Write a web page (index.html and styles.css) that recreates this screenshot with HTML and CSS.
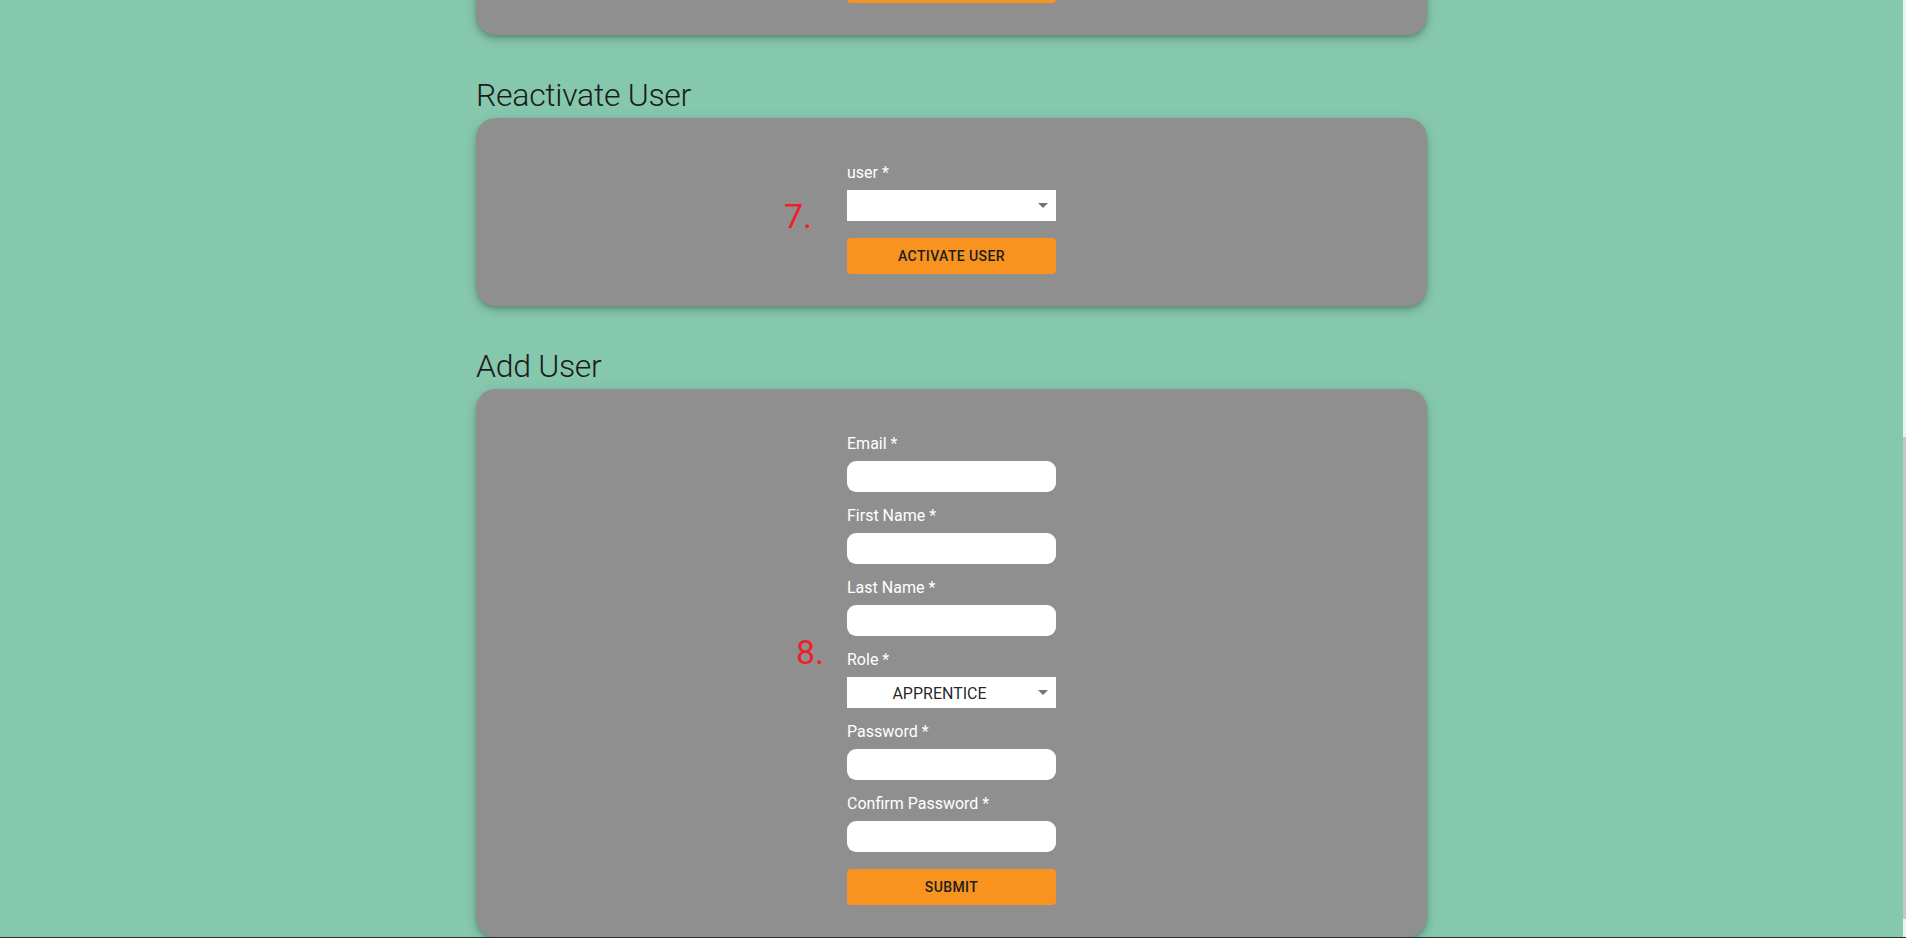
FILE: index.html
```html
<!DOCTYPE html>
<html lang="en">
<head>
<meta charset="utf-8">
<title>Users</title>
<link rel="stylesheet" href="styles.css">
</head>
<body>
<main class="page">
  <section class="card card-partial">
    <div class="form">
      <button class="btn" type="button"></button>
    </div>
  </section>

  <h2 class="section-title">Reactivate User</h2>
  <section class="card">
    <span class="annotation annotation-7">7.</span>
    <div class="form">
      <div class="field">
        <label class="label">user *</label>
        <div class="select">
          <span class="select-value"></span>
          <svg class="caret" width="10" height="5" viewBox="0 0 10 5"><path d="M0 0h10L5 5z" fill="#757575"/></svg>
        </div>
      </div>
      <button class="btn" type="button">Activate User</button>
    </div>
  </section>

  <h2 class="section-title">Add User</h2>
  <section class="card">
    <span class="annotation annotation-8">8.</span>
    <div class="form">
      <div class="field">
        <label class="label">Email *</label>
        <input class="input" type="text">
      </div>
      <div class="field">
        <label class="label">First Name *</label>
        <input class="input" type="text">
      </div>
      <div class="field">
        <label class="label">Last Name *</label>
        <input class="input" type="text">
      </div>
      <div class="field">
        <label class="label">Role *</label>
        <div class="select">
          <span class="select-value">APPRENTICE</span>
          <svg class="caret" width="10" height="5" viewBox="0 0 10 5"><path d="M0 0h10L5 5z" fill="#757575"/></svg>
        </div>
      </div>
      <div class="field">
        <label class="label">Password *</label>
        <input class="input" type="password">
      </div>
      <div class="field">
        <label class="label">Confirm Password *</label>
        <input class="input" type="password">
      </div>
      <button class="btn" type="button">Submit</button>
    </div>
  </section>
</main>
<div class="scrollbar"><div class="scrollbar-thumb"></div></div>
<div class="window-edge"></div>
</body>
</html>
```

FILE: styles.css
```css
html {
  overflow: hidden;
}

body {
  margin: 0;
  padding: 0 3px 0 0;
  background: #86c8ae;
  font-family: Roboto, "Liberation Sans", Arial, sans-serif;
  height: 938px;
  overflow: hidden;
}

.page {
  width: 951px;
  margin: -33px auto 0;
}

.card {
  position: relative;
  background: #8f8f8f;
  border-radius: 20px;
  padding: 45px 0 32px;
  box-shadow: 0 3px 5px -1px rgba(0, 0, 0, 0.2), 0 5px 10px 0 rgba(0, 0, 0, 0.12), 0 1px 14px 0 rgba(0, 0, 0, 0.08);
}

.card-partial {
  padding-top: 0;
  border-radius: 0 0 20px 20px;
}

.section-title {
  margin: 40px 0 3px;
  font-size: 32px;
  line-height: 40px;
  font-weight: 300;
  letter-spacing: -0.3px;
  color: #1c1c1c;
}

.form {
  width: 209px;
  margin: 0 auto;
  display: flex;
  flex-direction: column;
  gap: 14px;
}

.field {
  display: flex;
  flex-direction: column;
}

.label {
  display: block;
  font-size: 16px;
  line-height: 19px;
  margin-bottom: 8px;
  color: #ffffff;
  font-weight: 400;
}

.input {
  display: block;
  box-sizing: border-box;
  width: 209px;
  height: 31px;
  border: none;
  border-radius: 9px;
  background: #ffffff;
  padding: 0 10px;
  margin: 0;
  font: inherit;
  outline: none;
}

.select {
  display: flex;
  align-items: center;
  width: 209px;
  height: 31px;
  background: #ffffff;
  box-sizing: border-box;
}

.select-value {
  flex: 1;
  text-align: center;
  font-size: 16px;
  color: rgba(0, 0, 0, 0.87);
  padding-top: 1px;
}

.caret {
  display: block;
  margin: 0 8px 1px 6px;
}

.btn {
  display: block;
  width: 209px;
  height: 36px;
  margin-top: 3px;
  border: none;
  border-radius: 4px;
  background: #f7931e;
  color: #1d1d1d;
  font-family: Roboto, "Liberation Sans", Arial, sans-serif;
  font-size: 14px;
  font-weight: 500;
  letter-spacing: 0.4px;
  text-transform: uppercase;
  padding: 0;
}

.card-partial .btn {
  margin-top: 0;
}

.annotation {
  position: absolute;
  font-size: 34px;
  line-height: 34px;
  font-weight: 400;
  color: #ee1f2a;
}

.annotation-7 {
  left: 308px;
  top: 81px;
}

.annotation-8 {
  left: 320px;
  top: 246px;
}

.scrollbar {
  position: fixed;
  top: 0;
  right: 0;
  width: 3px;
  height: 937px;
  background: #e9f5f1;
}

.scrollbar-thumb {
  margin-top: 437px;
  height: 482px;
  background: #c2cac7;
}

.window-edge {
  position: fixed;
  left: 0;
  right: 0;
  bottom: 0;
  height: 1px;
  background: #2b2f2d;
}
```
